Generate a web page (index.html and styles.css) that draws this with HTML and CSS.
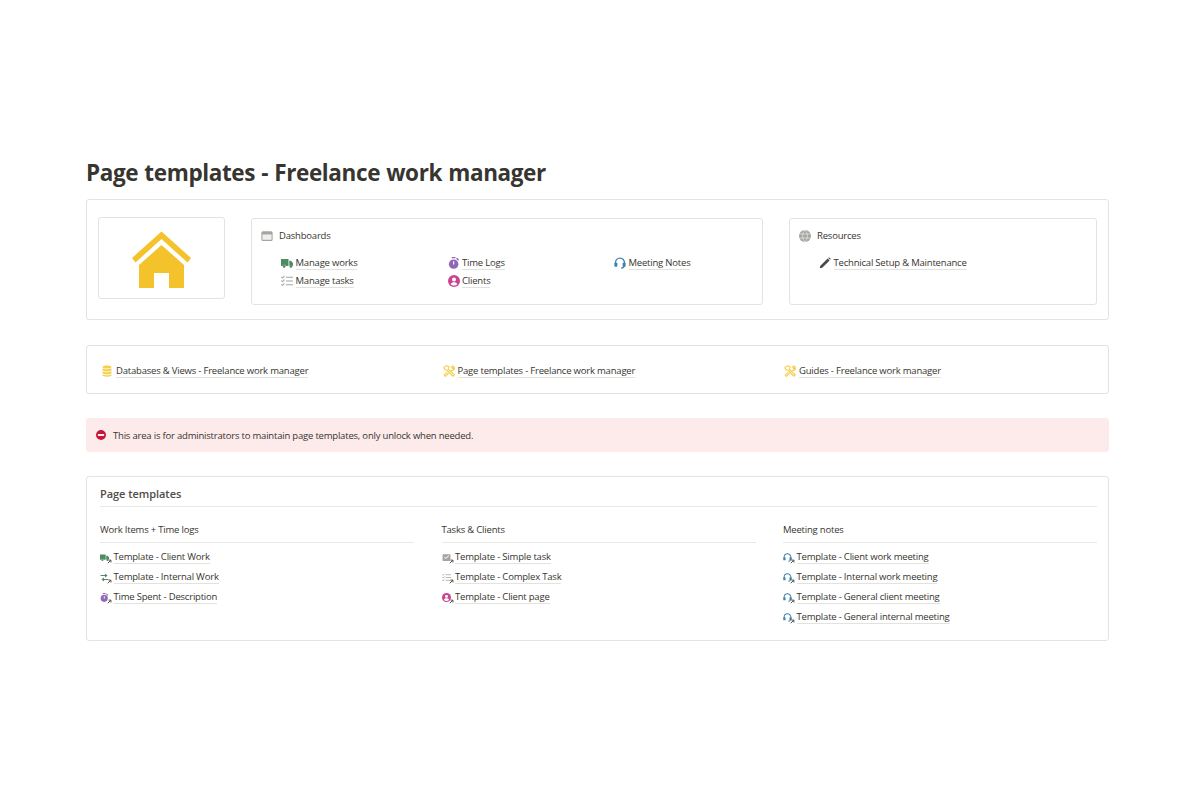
FILE: index.html
```html
<!DOCTYPE html>
<html lang="en">
<head>
<meta charset="utf-8">
<title>Page templates - Freelance work manager</title>
<link rel="stylesheet" href="styles.css">
</head>
<body>
<svg class="defs" width="0" height="0" aria-hidden="true">
  <defs>
    <symbol id="truck" viewBox="0 0 16 16"><path fill="currentColor" d="M0 2.500h10v9.500H6.400a2.300 2.300 0 0 0-4.400 0H0zM11 5h2.500L16 8.200V12h-.7a2.300 2.300 0 0 0-4.300 0z"/><circle fill="currentColor" cx="4.200" cy="12.500" r="1.800"/><circle fill="currentColor" cx="13.200" cy="12.500" r="1.800"/></symbol>
    <symbol id="checks" viewBox="0 0 16 16"><path fill="none" stroke="currentColor" stroke-width="1.400" d="M6.500 3H16M6.500 8H16M6.500 13H16M.5 2.500l1.500 1.500L4.500 1.200M.5 7.500 2 9l2.500-2.800M.5 12.500 2 14l2.500-2.800"/></symbol>
    <symbol id="swap" viewBox="0 0 16 16"><path fill="none" stroke="currentColor" stroke-width="1.800" d="M1 4.500h11M9 1.800l3 2.700-3 2.700M15 11.500H4M7 8.800l-3 2.700 3 2.700"/></symbol>
    <symbol id="taskbox" viewBox="0 0 16 16"><path fill="currentColor" fill-rule="evenodd" d="M2 2h12a1 1 0 0 1 1 1v10a1 1 0 0 1-1 1H2a1 1 0 0 1-1-1V3a1 1 0 0 1 1-1zM3.500 7.600l3.200 3.200 5.800-5.600-1-1-4.800 4.600-2.200-2.200z"/></symbol>
    <symbol id="timer" viewBox="0 0 16 16"><circle fill="currentColor" cx="7.500" cy="9.500" r="6.300"/><path fill="#fff" d="M6.800 5.500h1.500v4.500H6.800z"/><path fill="currentColor" d="M5 0h5v1.800H5zM12 1l2.800 2.600-1.300 1.300-2.800-2.600z"/></symbol>
    <symbol id="person" viewBox="0 0 16 16"><circle fill="currentColor" cx="8" cy="8" r="8"/><circle fill="#fff" cx="8" cy="6" r="2.600"/><path fill="#fff" d="M3.500 12.300c.8-2 2.500-2.800 4.500-2.800s3.700.8 4.500 2.800C11.300 13.500 9.800 14 8 14s-3.300-.5-4.500-1.700z"/></symbol>
    <symbol id="headset" viewBox="0 0 16 16"><path fill="none" stroke="currentColor" stroke-width="1.800" d="M2 10V7.500a6 6 0 0 1 12 0V10M13.600 11.500c-.3 2.300-1.600 3.300-4.100 3.300"/><rect fill="currentColor" x=".5" y="7.500" width="4" height="5.500" rx="1.200"/><rect fill="currentColor" x="11.500" y="7.500" width="4" height="5.500" rx="1.200"/></symbol>
    <symbol id="pencil" viewBox="0 0 16 16"><path fill="currentColor" d="M1 15l.8-3.300L11.600 2l2.500 2.500-9.800 9.700zM12.400 1.200 13.300.3l2.400 2.400-.9.900z"/></symbol>
    <symbol id="globe" viewBox="0 0 16 16"><circle fill="currentColor" cx="8" cy="8" r="8"/><path fill="none" stroke="#fff" stroke-width=".7" d="M.5 5.300h15M.5 10.700h15M8 0c-4.200 4.500-4.200 11.500 0 16M8 0c4.200 4.500 4.200 11.500 0 16"/></symbol>
    <symbol id="window" viewBox="0 0 16 16"><path fill="currentColor" fill-rule="evenodd" d="M2.500 1.500h11a2 2 0 0 1 2 2v9a2 2 0 0 1-2 2h-11a2 2 0 0 1-2-2v-9a2 2 0 0 1 2-2zM2 6v6.500c0 .3.200.5.500.5h11c.3 0 .5-.2.500-.5V6z"/><path fill="currentColor" opacity=".18" d="M2 6h12v7H2z"/></symbol>
    <symbol id="database" viewBox="1.500 0 13 16"><path fill="currentColor" d="M2 2.500C2 1.200 4.700.5 8 .5s6 .7 6 2-2.700 2.100-6 2.100-6-.8-6-2.100zM2 4.300C3.400 5.300 5.600 5.700 8 5.700s4.600-.4 6-1.400v2.400C14 8 11.300 8.700 8 8.700S2 8 2 6.700zM2 8.300C3.400 9.300 5.600 9.800 8 9.800s4.600-.5 6-1.500v2.500c0 1.200-2.700 1.900-6 1.900s-6-.7-6-1.900zM2 12.300c1.400 1 3.600 1.500 6 1.500s4.600-.5 6-1.500v1.300c0 1.200-2.700 1.900-6 1.900s-6-.7-6-1.900z"/></symbol>
    <symbol id="tools" viewBox="0 0 16 16"><path fill="none" stroke="currentColor" stroke-width="1.500" stroke-linejoin="round" d="M1 3.500 4.500 1 8 2.500 7 5.500 15 13l-1.800 2L5.500 7 3 6.500zM15 2l-2.600 2.300.2 1 1 .3L15.500 3.500a3.500 3.500 0 0 1-4.300 3.700L9.500 9M10.500 3.500a3.500 3.500 0 0 1 4.500-1.500M6 9.500 1.500 13.500l1.700 1.700L7.500 11"/></symbol>
    <symbol id="noentry" viewBox="0 0 16 16"><path fill="currentColor" fill-rule="evenodd" d="M8 0a8 8 0 1 1 0 16A8 8 0 0 1 8 0zM3 6.300v3.400h10V6.300z"/></symbol>
    <symbol id="arrow" viewBox="0 0 8 8"><path fill="none" stroke="#4a4945" stroke-width="1.500" d="M1.200 6.800 6 2M2.500 1.800h3.800v3.800"/></symbol>
  </defs>
</svg>

<main class="page">
  <h1 class="title">Page templates - Freelance work manager</h1>

  <section class="box top">
    <div class="card home">
      <svg class="house" viewBox="0 0 60 58" width="60" height="58" aria-hidden="true">
        <path fill="#f4c22b" d="M29.500.5 59 27l-3.500 4.500L29.500 8 3.500 31.500 0 27z"/>
        <path fill="#f4c22b" d="M29.500 14 52 34v23H37V42H22v15H7V34z"/>
      </svg>
    </div>
    <div class="card dash">
      <div class="head"><svg class="ico c-gray"><use href="#window"/></svg><span>Dashboards</span></div>
      <div class="dash-links">
        <a class="link"><svg class="ico c-green"><use href="#truck"/></svg><span>Manage works</span></a>
        <a class="link"><svg class="ico c-purple"><use href="#timer"/></svg><span>Time Logs</span></a>
        <a class="link"><svg class="ico c-blue"><use href="#headset"/></svg><span>Meeting Notes</span></a>
        <a class="link"><svg class="ico c-gray"><use href="#checks"/></svg><span>Manage tasks</span></a>
        <a class="link"><svg class="ico c-pink"><use href="#person"/></svg><span>Clients</span></a>
      </div>
    </div>
    <div class="card res">
      <div class="head"><svg class="ico c-gray"><use href="#globe"/></svg><span>Resources</span></div>
      <div class="res-links">
        <a class="link"><svg class="ico c-dark"><use href="#pencil"/></svg><span>Technical Setup &amp; Maintenance</span></a>
      </div>
    </div>
  </section>

  <section class="box nav">
    <a class="link"><svg class="ico c-yellow"><use href="#database"/></svg><span>Databases &amp; Views - Freelance work manager</span></a>
    <a class="link"><svg class="ico c-yellow"><use href="#tools"/></svg><span>Page templates - Freelance work manager</span></a>
    <a class="link"><svg class="ico c-yellow"><use href="#tools"/></svg><span>Guides - Freelance work manager</span></a>
  </section>

  <section class="callout">
    <svg class="ico c-red"><use href="#noentry"/></svg>
    <span>This area is for administrators to maintain page templates, only unlock when needed.</span>
  </section>

  <section class="box templates">
    <h2 class="tpl-title">Page templates</h2>
    <div class="tpl-cols">
      <div class="tpl-col">
        <h3 class="col-title">Work Items + Time logs</h3>
        <a class="link tpl"><span class="badge"><svg class="ico c-green"><use href="#truck"/></svg><svg class="arr"><use href="#arrow"/></svg></span><span>Template - Client Work</span></a>
        <a class="link tpl"><span class="badge"><svg class="ico c-green"><use href="#swap"/></svg><svg class="arr"><use href="#arrow"/></svg></span><span>Template - Internal Work</span></a>
        <a class="link tpl"><span class="badge"><svg class="ico c-purple"><use href="#timer"/></svg><svg class="arr"><use href="#arrow"/></svg></span><span>Time Spent - Description</span></a>
      </div>
      <div class="tpl-col">
        <h3 class="col-title">Tasks &amp; Clients</h3>
        <a class="link tpl"><span class="badge"><svg class="ico c-gray"><use href="#taskbox"/></svg><svg class="arr"><use href="#arrow"/></svg></span><span>Template - Simple task</span></a>
        <a class="link tpl"><span class="badge"><svg class="ico c-gray"><use href="#checks"/></svg><svg class="arr"><use href="#arrow"/></svg></span><span>Template - Complex Task</span></a>
        <a class="link tpl"><span class="badge"><svg class="ico c-pink"><use href="#person"/></svg><svg class="arr"><use href="#arrow"/></svg></span><span>Template - Client page</span></a>
      </div>
      <div class="tpl-col">
        <h3 class="col-title">Meeting notes</h3>
        <a class="link tpl"><span class="badge"><svg class="ico c-blue"><use href="#headset"/></svg><svg class="arr"><use href="#arrow"/></svg></span><span>Template - Client work meeting</span></a>
        <a class="link tpl"><span class="badge"><svg class="ico c-blue"><use href="#headset"/></svg><svg class="arr"><use href="#arrow"/></svg></span><span>Template - Internal work meeting</span></a>
        <a class="link tpl"><span class="badge"><svg class="ico c-blue"><use href="#headset"/></svg><svg class="arr"><use href="#arrow"/></svg></span><span>Template - General client meeting</span></a>
        <a class="link tpl"><span class="badge"><svg class="ico c-blue"><use href="#headset"/></svg><svg class="arr"><use href="#arrow"/></svg></span><span>Template - General internal meeting</span></a>
      </div>
    </div>
  </section>
</main>
</body>
</html>
```

FILE: styles.css
```css
* { box-sizing: border-box; }
html, body { margin: 0; padding: 0; background: #fff; }
body {
  font-family: "Open Sans", "Noto Sans", sans-serif;
  font-size: 9.5px;
  letter-spacing: -0.2px;
  color: #37352f;
}
.defs { display: block; height: 0; }
.page {
  width: 1200px;
  height: 800px;
  padding: 157px 91px 0 86px;
  display: flex;
  flex-direction: column;
}
.title {
  margin: 0 0 11px;
  font-size: 22.5px;
  line-height: 31px;
  letter-spacing: -0.38px;
  word-spacing: 0.7px;
  font-weight: 700;
  color: #37352f;
}
.box, .card {
  border: 1px solid #e3e3e1;
  border-radius: 3px;
  background: #fff;
}
.top {
  height: 121px;
  display: flex;
  align-items: flex-start;
  padding: 18px 11px 0;
}
.card { flex: none; }
.home {
  width: 127px;
  height: 82px;
  margin-top: -1px;
  display: flex;
  align-items: center;
  justify-content: center;
  padding-top: 3px;
  margin-right: 26px;
}
.dash { width: 512px; height: 87px; margin-right: 26px; padding: 10px 9px; }
.res { width: 308px; height: 87px; padding: 10px 9px; }
.head { display: flex; align-items: center; gap: 6px; line-height: 13px; }
.ico { width: 12px; height: 12px; flex: none; display: block; }
.c-gray { color: #a5a4a0; }
.c-green { color: #4e8a63; }
.c-purple { color: #8f68b5; }
.c-pink { color: #c9468f; }
.c-blue { color: #3f82ab; }
.c-dark { color: #4a4945; }
.c-yellow { color: #f6cf4f; }
.c-red { color: #c4173a; }
.link { display: flex; align-items: center; gap: 2.500px; line-height: 13px; color: #37352f; }
.link > span:last-child { border-bottom: 1px solid #e2e2e0; }
.dash-links {
  display: grid;
  grid-template-columns: 166.5px 166.5px 166.5px;
  row-gap: 4px;
  margin-top: 14px;
  padding-left: 20px;
}
.res-links { margin-top: 14px; padding-left: 20px; }
.nav {
  height: 49px;
  margin-top: 25px;
  padding: 2px 0 0 14px;
  display: grid;
  grid-template-columns: 341.500px 341.500px 1fr;
  align-items: center;
}
.nav .link { gap: 3px; }
.callout {
  height: 34px;
  margin-top: 24px;
  background: #fdebec;
  border-radius: 3px;
  padding: 0 9px 0 10px;
  display: flex;
  align-items: center;
  gap: 7px;
}
.callout .ico { width: 10px; height: 10px; }
.templates { height: 165px; margin-top: 24px; padding: 9px 11px 0 13px; }
.tpl-title {
  margin: 0;
  font-size: 11px;
  line-height: 15px;
  letter-spacing: -0.05px;
  font-weight: 600;
  color: #4f4d48;
  padding-bottom: 5px;
  border-bottom: 1px solid #e8e8e6;
}
.tpl-cols {
  display: grid;
  grid-template-columns: 314px 314px 314px;
  column-gap: 27.500px;
  margin-top: 16px;
}
.col-title {
  margin: 0 0 4px;
  font-size: 9.500px;
  line-height: 13px;
  font-weight: 400;
  padding-bottom: 6px;
  border-bottom: 1px solid #e8e8e6;
}
.tpl { height: 20px; }
.badge { position: relative; width: 11px; height: 11px; flex: none; }
.badge .ico { width: 9px; height: 9px; margin-top: 1px; }
.arr { position: absolute; right: -1px; bottom: -1px; width: 5px; height: 5px; }
```
